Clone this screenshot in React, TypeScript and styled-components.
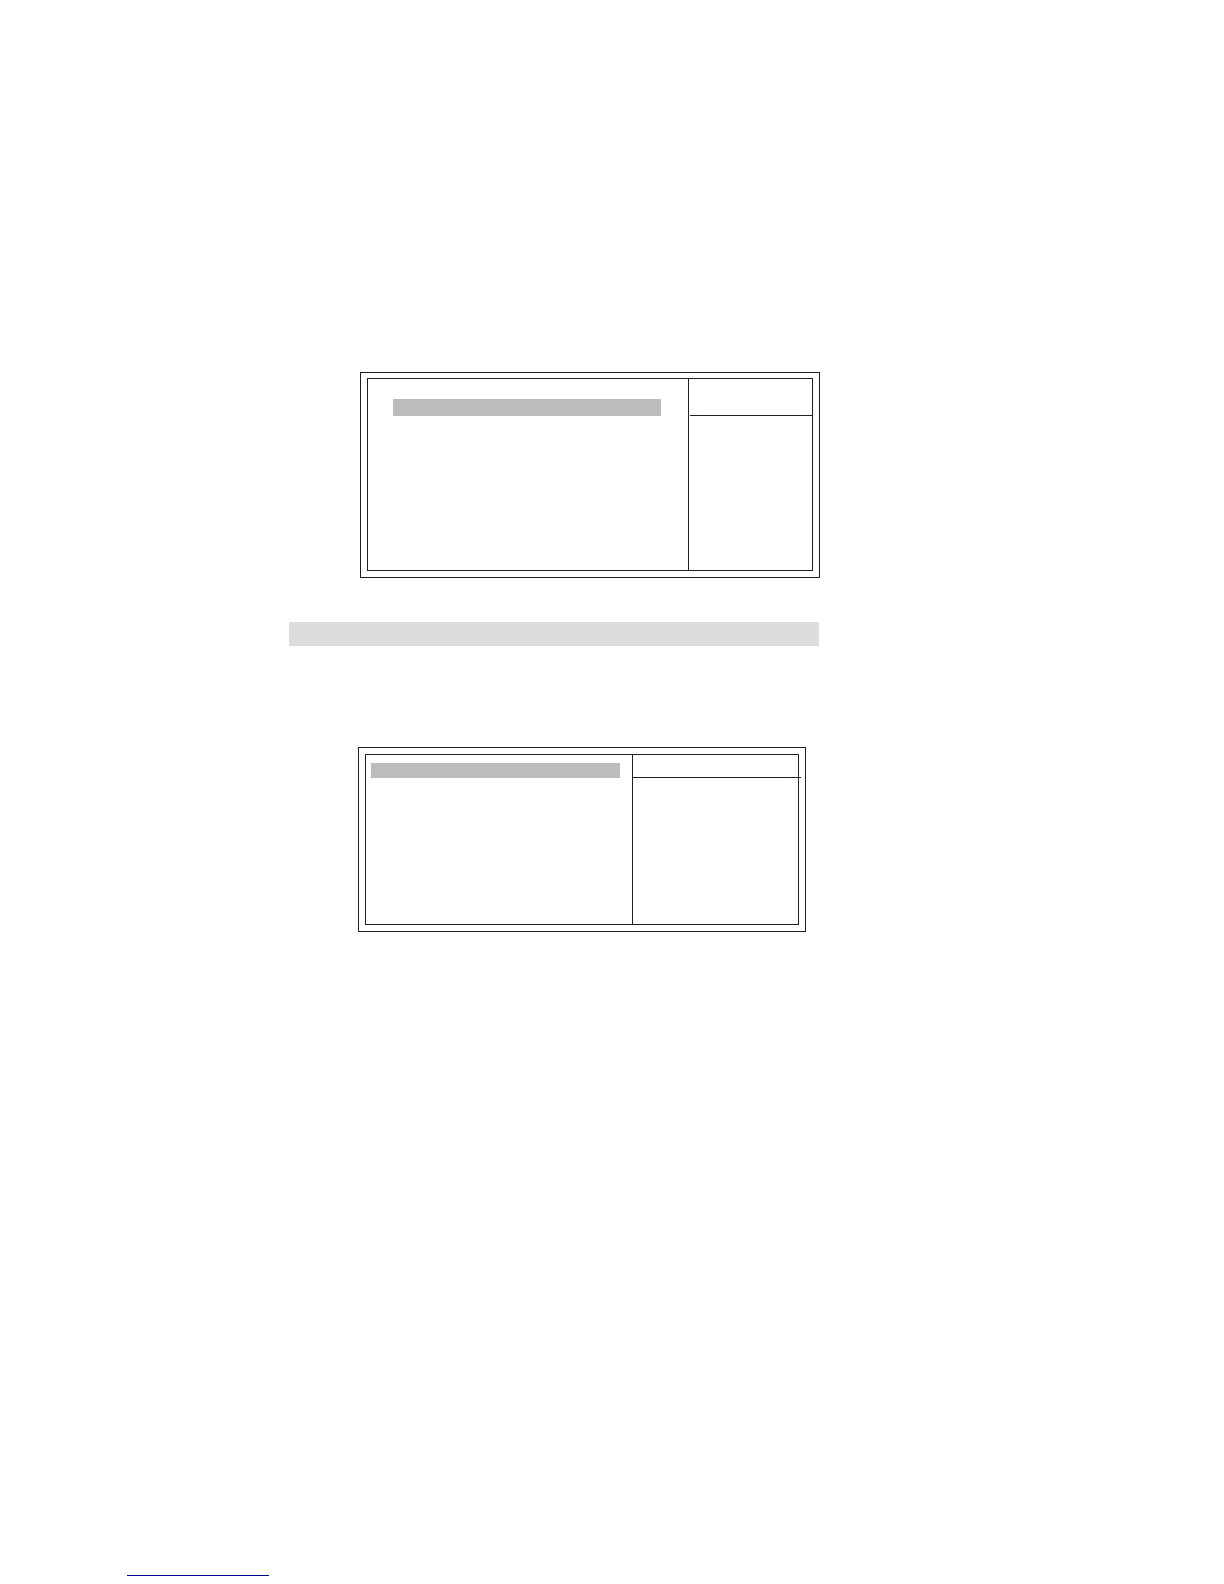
import React from "react";
import styled, { createGlobalStyle } from "styled-components";

const INK = "#231f20";

const GlobalStyle = createGlobalStyle`
  *, *::before, *::after { box-sizing: border-box; }
  body {
    margin: 0;
    background: #fff;
    font-family: "Liberation Sans", Arial, sans-serif;
  }
`;

const Page = styled.div`
  display: flex;
  flex-direction: column;
  justify-content: space-between;
  min-height: 100vh;
`;

const Content = styled.main`
  display: flex;
  flex-direction: column;
  max-width: 820px;
  padding: 372px 0 0 289px;
`;

const Frame = styled.section<{ $inset: string; $padding: string }>`
  margin: ${(p) => p.$inset};
  padding: ${(p) => p.$padding};
  border: 1px solid ${INK};
`;

const Screen = styled.div<{ $side: number; $height: number }>`
  display: grid;
  grid-template-columns: 1fr ${(p) => p.$side}px;
  min-height: ${(p) => p.$height}px;
  border: 1px solid ${INK};
`;

const Options = styled.div<{ $padding: string }>`
  padding: ${(p) => p.$padding};
`;

const Highlight = styled.div<{ $height: number }>`
  height: ${(p) => p.$height}px;
  background: #bcbcbc;
`;

const Help = styled.aside`
  border-left: 1px solid ${INK};
`;

const HelpHeader = styled.header<{ $height: number; $margin: string }>`
  height: ${(p) => p.$height}px;
  margin: ${(p) => p.$margin};
  border-bottom: 1px solid ${INK};
`;

const Band = styled.div`
  height: 24px;
  margin: 44px 1px 101px 0;
  background: #dddddd;
`;

const Footer = styled.footer`
  padding: 24px 0 8px 127px;
`;

const FooterRule = styled.hr`
  width: 142px;
  margin: 0;
  border: 0;
  border-top: 1px solid #00008b;
`;

export default function App() {
  return (
    <Page>
      <GlobalStyle />
      <Content>
        <Frame $inset="0 0 0 71px" $padding="5px 6px 6px">
          <Screen $side={124} $height={193}>
            <Options $padding="20px 27px 0 25px">
              <Highlight $height={17} />
            </Options>
            <Help>
              <HelpHeader $height={37} $margin="0 0 0 1px" />
            </Help>
          </Screen>
        </Frame>
        <Band />
        <Frame $inset="0 14px 0 69px" $padding="6px">
          <Screen $side={166} $height={171}>
            <Options $padding="8px 12px 0 5px">
              <Highlight $height={15} />
            </Options>
            <Help>
              <HelpHeader $height={23} $margin="0 -3px 0 0" />
            </Help>
          </Screen>
        </Frame>
      </Content>
      <Footer>
        <FooterRule />
      </Footer>
    </Page>
  );
}
